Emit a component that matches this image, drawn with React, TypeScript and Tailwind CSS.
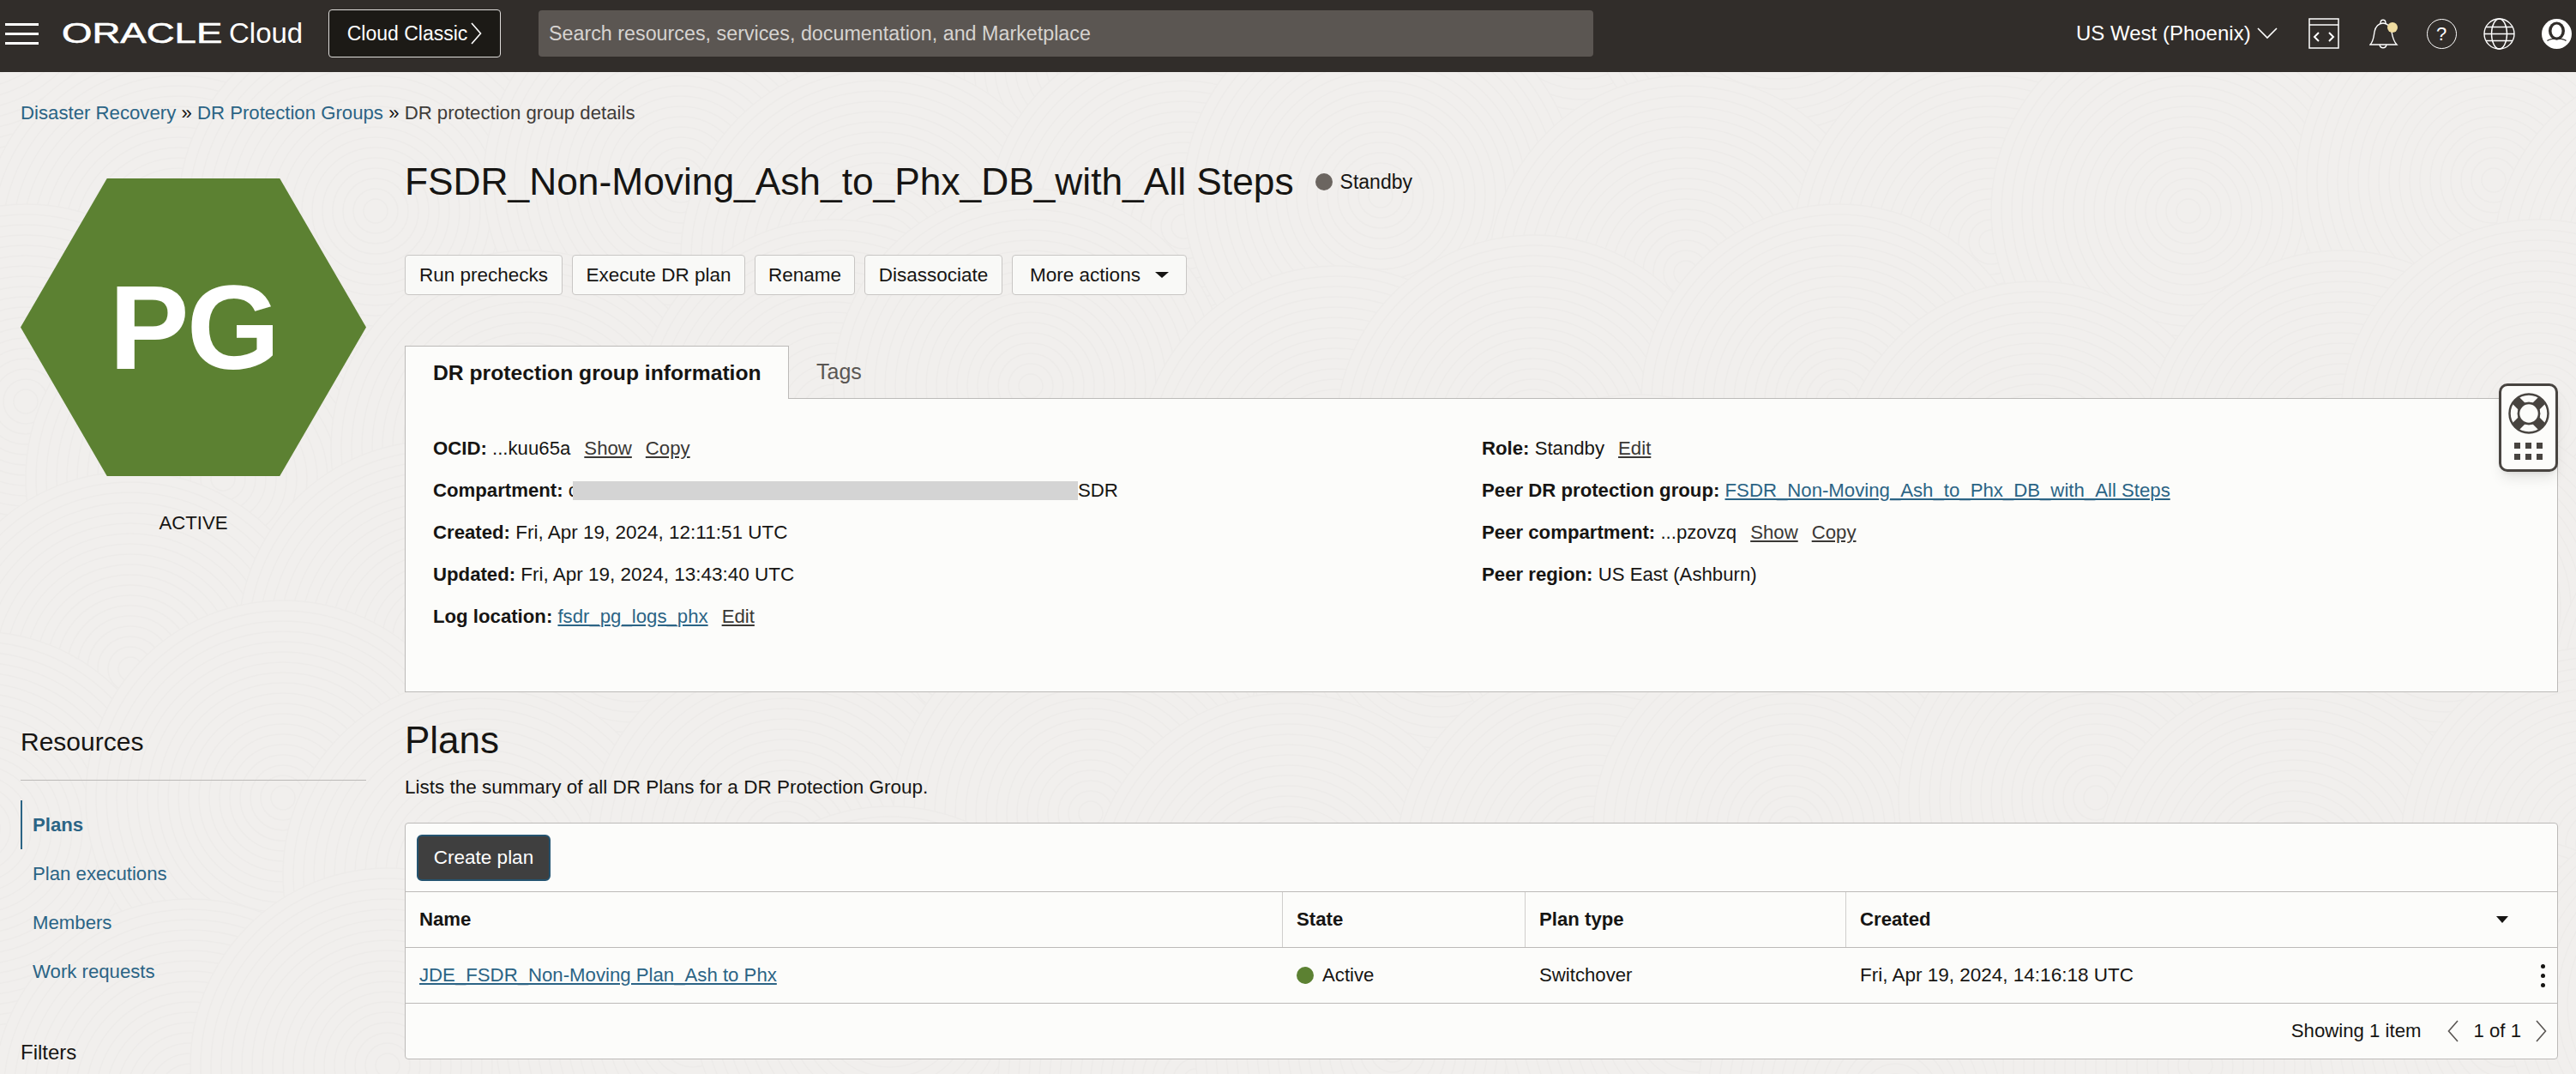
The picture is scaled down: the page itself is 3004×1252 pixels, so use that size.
import React from 'react';

const swirlCenters: number[][] = [];
for (let row = 0; row < 6; row++) {
  for (let col = 0; col < 11; col++) {
    const jx = ((row * 7 + col * 13) % 9) * 14;
    const jy = ((row * 11 + col * 5) % 7) * 18;
    swirlCenters.push([col * 300 - 40 + jx + (row % 2) * 150, row * 240 - 30 + jy]);
  }
}
const swirlRadii = [230, 218, 206, 194, 182, 170, 158, 146, 134, 122, 110, 98, 86, 74, 62, 50, 38, 26, 14];

const Swirls: React.FC = () => (
  <svg className="absolute inset-0 pointer-events-none" width="3004" height="1252">
    {swirlCenters.map(([cx, cy], i) => (
      <g key={i} stroke="#edebe9" strokeWidth="1.5" fill="#f1efed">
        {swirlRadii.map((r) => (
          <circle key={r} cx={cx} cy={cy} r={r} />
        ))}
      </g>
    ))}
  </svg>
);

const Hamburger: React.FC = () => (
  <div className="flex flex-col gap-[8px] w-[39px] ml-[6px]">
    <div className="h-[3px] bg-white" />
    <div className="h-[3px] bg-white" />
    <div className="h-[3px] bg-white" />
  </div>
);

const Chevron: React.FC<{ left?: boolean; color?: string; className?: string }> = ({ left, color = '#fff', className }) => (
  <svg width="13" height="26" viewBox="0 0 13 26" fill="none" stroke={color} strokeWidth="1.6" className={className}>
    <path d={left ? 'M12 1L1.500 13 12 25' : 'M1 1l10.500 12L1 25'} />
  </svg>
);

const CodeIcon: React.FC = () => (
  <svg width="36" height="36" viewBox="0 0 36 36" fill="none" stroke="#fff" strokeWidth="1.5">
    <rect x="1" y="1" width="34" height="34" />
    <line x1="1" y1="8" x2="35" y2="8" />
    <path d="M12 17l-5 5 5 5M24 17l5 5-5 5" strokeWidth="2" />
  </svg>
);

const BellIcon: React.FC = () => (
  <svg width="34" height="36" viewBox="0 0 34 36" fill="none" stroke="#fff" strokeWidth="1.4">
    <path d="M1 31c4-4 4-9 5-15 1-6 5-10 10-10s9 4 10 10c1 6 2 11 6 15z" />
    <path d="M13 6c0-5 6-5 6 0" />
    <path d="M12 31c1 5 7 5 8 0" />
    <circle cx="27" cy="11" r="6" fill="#f0dca0" stroke="none" />
  </svg>
);

const HelpIcon: React.FC = () => (
  <div className="w-[35px] h-[35px] rounded-full border-[1.5px] border-white flex items-center justify-center text-white text-[22px]">?</div>
);

const GlobeIcon: React.FC = () => (
  <svg width="37" height="37" viewBox="0 0 37 37" fill="none" stroke="#fff" strokeWidth="1.4">
    <circle cx="18.500" cy="18.500" r="17.500" />
    <ellipse cx="18.500" cy="18.500" rx="9" ry="17.500" />
    <path d="M3 10.500h31M1 18.500h35M3 26.500h31" />
  </svg>
);

const Avatar: React.FC = () => (
  <svg width="35" height="35" viewBox="0 0 35 35">
    <circle cx="17.500" cy="17.500" r="17.500" fill="#fff" />
    <ellipse cx="17.500" cy="14" rx="9.500" ry="10.500" fill="#312d2a" />
    <ellipse cx="17.500" cy="14" rx="6" ry="7.500" fill="#fff" />
    <path d="M6 25c4-2 8-3 11.500-2 4-1 8 0 11.500 2l-1 1c-3-2-7-2.500-10.500-1.500C14 23.500 10 24 7 26z" fill="#312d2a" />
  </svg>
);

const Lifebuoy: React.FC = () => (
  <svg width="48" height="48" viewBox="0 0 48 48" fill="none">
    <circle cx="24" cy="24" r="22.500" stroke="#484440" strokeWidth="2.500" />
    <circle cx="24" cy="24" r="12" stroke="#484440" strokeWidth="2.500" />
    <path d="M8 8L16 16M40 8L32 16M8 40L16 32M40 40L32 32" stroke="#484440" strokeWidth="11" />
    <circle cx="24" cy="24" r="12" fill="#fcfcfa" stroke="#484440" strokeWidth="2.500" />
  </svg>
);

const Row: React.FC<{ label: string; children: React.ReactNode }> = ({ label, children }) => (
  <div className="h-[49px] flex items-center whitespace-pre">
    <span className="font-bold">{label} </span>
    {children}
  </div>
);

const Act: React.FC<{ children: React.ReactNode }> = ({ children }) => (
  <span className="underline ml-[16px] text-[#3a3835]">{children}</span>
);

const Link: React.FC<{ children: React.ReactNode }> = ({ children }) => (
  <span className="underline text-[#2b6485]">{children}</span>
);

const ActionButton: React.FC<{ children: React.ReactNode; className?: string }> = ({ children, className }) => (
  <button className={`h-[47px] border border-[#c8c6c4] rounded-[4px] bg-[#f9f9f7] text-[22.5px] text-[#161513] flex items-center justify-center ${className ?? ''}`}>
    {children}
  </button>
);

const App: React.FC = () => {
  return (
    <div className="relative w-[3004px] h-[1252px] overflow-hidden bg-[#f1efed] text-[#161513] text-[22.2px] font-['Liberation_Sans',Arial,sans-serif]">
      <Swirls />

      {/* Top bar */}
      <header className="relative h-[84px] pb-[6px] bg-[#312d2a] flex items-center text-white">
        <Hamburger />
        <div className="ml-[27px] w-[183px] h-[40px] text-[33px] leading-[40px] origin-left scale-x-[1.38] [-webkit-text-stroke:0.6px_white]">ORACLE</div>
        <div className="ml-[12px] w-[87px] text-[33px] leading-[40px]">Cloud</div>
        <button className="ml-[29px] w-[201px] h-[56px] rounded-[4px] border border-[#dedcda] bg-[#1c1a16] text-[23px] flex items-center justify-center gap-[4px]">
          Cloud Classic
          <Chevron />
        </button>
        <div className="ml-[44px] w-[1230px] h-[54px] rounded-[4px] bg-[#5b5652] flex items-center pl-[12px] text-[23.3px] text-[#d6d3d0]">
          Search resources, services, documentation, and Marketplace
        </div>
        <div className="ml-[563px] text-[24px] whitespace-nowrap">US West (Phoenix)</div>
        <svg className="ml-[7px]" width="24" height="14" viewBox="0 0 24 14" fill="none" stroke="#fff" strokeWidth="1.6">
          <path d="M1 1l11 11L23 1" />
        </svg>
        <div className="ml-[36px]"><CodeIcon /></div>
        <div className="ml-[35px]"><BellIcon /></div>
        <div className="ml-[33px]"><HelpIcon /></div>
        <div className="ml-[31px]"><GlobeIcon /></div>
        <div className="ml-[31px]"><Avatar /></div>
      </header>

      <div className="relative pl-[24px] pt-[36px] h-[60px] leading-[24px] whitespace-pre">
        <span className="text-[#2b6485]">Disaster Recovery</span>
        <span> » </span>
        <span className="text-[#2b6485]">DR Protection Groups</span>
        <span> » </span>
        <span className="text-[#3f3c39]">DR protection group details</span>
      </div>

      <div className="relative flex">
        <aside className="w-[472px] pl-[24px] shrink-0">
          <div className="w-[403px]">
            <div className="mt-[64px] h-[347px] bg-[#5c8132] flex items-center justify-center text-white font-bold text-[140px] tracking-[-3px] [clip-path:polygon(25%_0,75%_0,100%_50%,75%_100%,25%_100%,0_50%)]">
              PG
            </div>
            <div className="mt-[43px] text-center leading-[24px]">ACTIVE</div>
            <div className="mt-[225px] pb-[26px] border-b border-[#bcbab8] text-[30px] leading-[36px]">Resources</div>
            <nav className="mt-[23px] text-[#2b6485]">
              <div className="h-[57px] pl-[12px] border-l-[2px] border-[#2b6485] font-bold flex items-center">Plans</div>
              <div className="h-[57px] pl-[14px] flex items-center">Plan executions</div>
              <div className="h-[57px] pl-[14px] flex items-center">Members</div>
              <div className="h-[57px] pl-[14px] flex items-center">Work requests</div>
            </nav>
            <div className="mt-[51px] text-[24px] leading-[30px]">Filters</div>
          </div>
        </aside>

        <main className="w-[2511px]">
          <div className="mt-[42px] h-[52px] flex items-center whitespace-nowrap">
            <h1 className="text-[44.3px] leading-[52px] font-normal">FSDR_Non-Moving_Ash_to_Phx_DB_with_All Steps</h1>
            <span className="ml-[25px] w-[20px] h-[20px] rounded-full bg-[#6b6560]" />
            <span className="ml-[9px] text-[23px]">Standby</span>
          </div>

          <div className="mt-[59px] flex gap-[11px]">
            <ActionButton className="w-[184px]">Run prechecks</ActionButton>
            <ActionButton className="w-[202px]">Execute DR plan</ActionButton>
            <ActionButton className="w-[117px]">Rename</ActionButton>
            <ActionButton className="w-[161px]">Disassociate</ActionButton>
            <ActionButton className="w-[204px] gap-[17px]">
              More actions
              <span className="w-0 h-0 border-x-[8px] border-x-transparent border-t-[7px] border-t-[#161513]" />
            </ActionButton>
          </div>

          {/* Tabs and details panel */}
          <div className="mt-[59px] h-[62px] flex items-stretch">
            <div className="w-[448px] border-x border-t border-[#bcbab8] bg-[#fcfcfa] flex items-center pl-[32px] text-[24.7px] font-bold whitespace-nowrap">DR protection group information</div>
            <div className="flex-1 border-b border-[#bcbab8] flex items-center pl-[32px] text-[25px] text-[#5a5653]">Tags</div>
          </div>
          <div className="h-[342px] border-x border-b border-[#bcbab8] bg-[#fcfcfa] pl-[32px] pt-[33px] flex">
            <div className="w-[1223px]">
              <Row label="OCID:">...kuu65a<Act>Show</Act><Act>Copy</Act></Row>
              <Row label="Compartment:">
                <span>c</span>
                {/* redaction bar sits over the start of the name */}
                <span className="inline-block w-[589px] h-[22px] bg-[#d4d4d4] -ml-[6px]" />
                SDR
              </Row>
              <Row label="Created:"><span className="text-[22.5px]">Fri, Apr 19, 2024, 12:11:51 UTC</span></Row>
              <Row label="Updated:"><span className="text-[22.5px]">Fri, Apr 19, 2024, 13:43:40 UTC</span></Row>
              <Row label="Log location:"><Link>fsdr_pg_logs_phx</Link><Act>Edit</Act></Row>
            </div>
            <div>
              <Row label="Role:">Standby<Act>Edit</Act></Row>
              <Row label="Peer DR protection group:"><Link>FSDR_Non-Moving_Ash_to_Phx_DB_with_All Steps</Link></Row>
              <Row label="Peer compartment:">...pzovzq<Act>Show</Act><Act>Copy</Act></Row>
              <Row label="Peer region:">US East (Ashburn)</Row>
            </div>
          </div>

          <h2 className="mt-[30px] text-[44px] leading-[52px] font-normal">Plans</h2>
          <p className="mt-[16px] leading-[26px] text-[22.5px]">Lists the summary of all DR Plans for a DR Protection Group.</p>

          {/* Plans table */}
          <div className="mt-[28px] border border-[#bcbab8] rounded-[4px] bg-[#fcfcfa]">
            <div className="h-[80px] pl-[13px] pt-[13px] border-b border-[#bcbab8]">
              <button className="w-[156px] h-[54px] rounded-[6px] border-[2px] border-[#24536f] bg-[#3f3f3f] text-white text-[22.5px]">Create plan</button>
            </div>
            <div className="h-[65px] grid grid-cols-[1023px_283px_374px_1fr] items-stretch font-bold border-b border-[#bcbab8]">
              <div className="pl-[16px] flex items-center border-r border-[#d0cecc]">Name</div>
              <div className="pl-[16px] flex items-center border-r border-[#d0cecc]">State</div>
              <div className="pl-[16px] flex items-center border-r border-[#d0cecc]">Plan type</div>
              <div className="pl-[16px] pr-[57px] flex items-center justify-between">
                Created
                <span className="w-0 h-0 border-x-[7px] border-x-transparent border-t-[8px] border-t-[#161513]" />
              </div>
            </div>
            <div className="h-[65px] grid grid-cols-[1023px_283px_374px_1fr] items-center border-b border-[#bcbab8]">
              <div className="pl-[16px]"><Link>JDE_FSDR_Non-Moving Plan_Ash to Phx</Link></div>
              <div className="pl-[16px] flex items-center gap-[10px]">
                <span className="w-[20px] h-[20px] rounded-full bg-[#5c8132]" />
                Active
              </div>
              <div className="pl-[16px]">Switchover</div>
              <div className="pl-[16px] pr-[14px] flex items-center justify-between">
                <span className="text-[22.5px]">Fri, Apr 19, 2024, 14:16:18 UTC</span>
                <span className="flex flex-col gap-[6px]">
                  <span className="w-[5px] h-[5px] rounded-full bg-[#161513]" />
                  <span className="w-[5px] h-[5px] rounded-full bg-[#161513]" />
                  <span className="w-[5px] h-[5px] rounded-full bg-[#161513]" />
                </span>
              </div>
            </div>
            <div className="h-[64px] flex items-center justify-end pr-[12px]">
              <span className="mr-[31px]">Showing 1 item</span>
              <Chevron left color="#5a5653" />
              <span className="mx-[17px]">1 of 1</span>
              <Chevron color="#5a5653" />
            </div>
          </div>
        </main>
      </div>

      {/* Floating help widget */}
      <div className="absolute top-[447px] right-[21px] w-[69px] h-[103px] rounded-[10px] border-[3px] border-[#484440] bg-[#fcfcfa] shadow-lg flex flex-col items-center pt-[8px]">
        <Lifebuoy />
        <div className="mt-[10px] grid grid-cols-3 gap-x-[6px] gap-y-[6px]">
          {[0, 1, 2, 3, 4, 5].map((n) => (
            <span key={n} className="w-[7px] h-[7px] bg-[#484440]" />
          ))}
        </div>
      </div>
    </div>
  );
};

export default App;
